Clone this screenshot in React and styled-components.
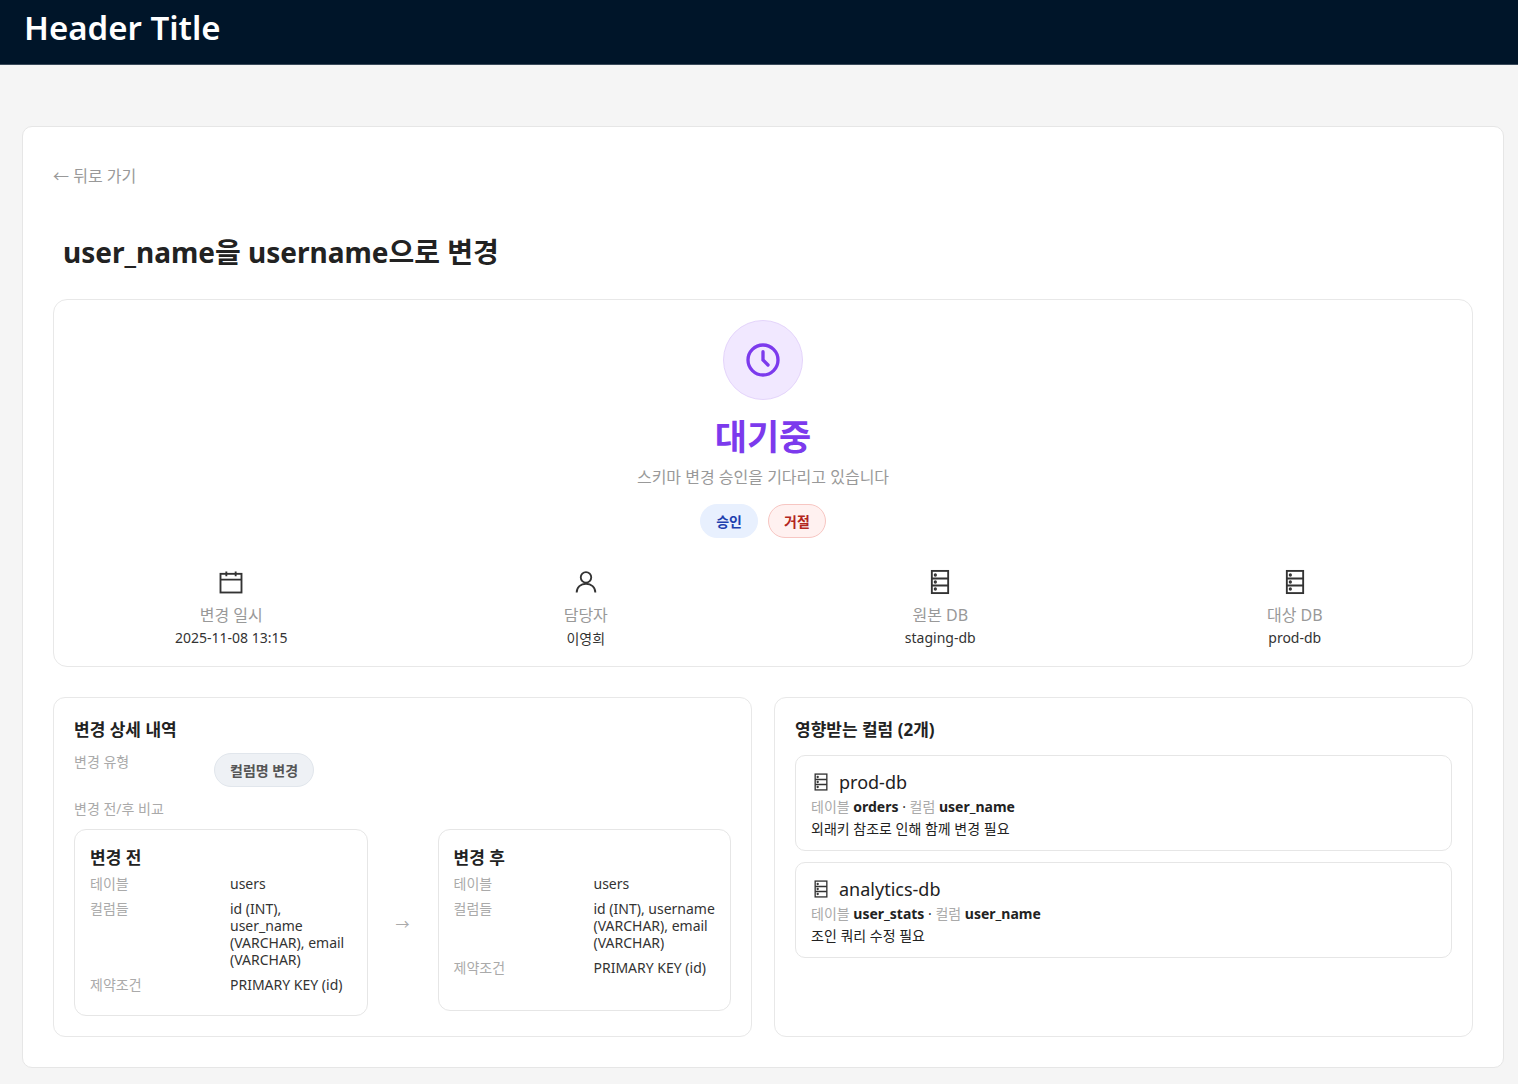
import styled, { createGlobalStyle } from 'styled-components';

const Global = createGlobalStyle`
  body {
    margin: 0;
    background: #f5f5f5;
    font-family: "Noto Sans", "Noto Sans CJK KR", sans-serif;
    color: #222;
  }
`;

const CalendarIcon = () => (
  <svg width="28" height="28" viewBox="0 0 24 24" fill="none" stroke="#333" strokeWidth="1.6">
    <rect x="3" y="5" width="18" height="16" />
    <path d="M3 10h18M8 3v4M16 3v4" />
  </svg>
);

const UserIcon = () => (
  <svg width="28" height="28" viewBox="0 0 24 24" fill="none" stroke="#333" strokeWidth="1.6">
    <circle cx="12" cy="8" r="4.5" />
    <path d="M4 21c0-4.5 3.5-7.5 8-7.5s8 3 8 7.5" />
  </svg>
);

const ServerIcon = ({ size = 28 }) => (
  <svg width={size} height={size} viewBox="0 0 24 24" fill="none" stroke="#333" strokeWidth="1.6">
    <rect x="5" y="2.5" width="14" height="19" />
    <path d="M5 9h14M5 15h14" />
    <circle cx="8" cy="6" r="0.6" fill="#333" />
    <circle cx="8" cy="12" r="0.6" fill="#333" />
    <circle cx="8" cy="18" r="0.6" fill="#333" />
  </svg>
);

const ClockIcon = () => (
  <svg width="40" height="40" viewBox="0 0 24 24" fill="none" stroke="#7c3aed" strokeWidth="2" strokeLinecap="round">
    <circle cx="12" cy="12" r="9" />
    <path d="M12 7v5l3 3" />
  </svg>
);

const meta = [
  { icon: <CalendarIcon />, label: '변경 일시', value: '2025-11-08 13:15' },
  { icon: <UserIcon />, label: '담당자', value: '이영희' },
  { icon: <ServerIcon />, label: '원본 DB', value: 'staging-db' },
  { icon: <ServerIcon />, label: '대상 DB', value: 'prod-db' },
];

const before = [
  ['테이블', 'users'],
  ['컬럼들', 'id (INT), user_name (VARCHAR), email (VARCHAR)'],
  ['제약조건', 'PRIMARY KEY (id)'],
];
const after = [
  ['테이블', 'users'],
  ['컬럼들', 'id (INT), username (VARCHAR), email (VARCHAR)'],
  ['제약조건', 'PRIMARY KEY (id)'],
];

const affected = [
  { db: 'prod-db', table: 'orders', column: 'user_name', note: '외래키 참조로 인해 함께 변경 필요' },
  { db: 'analytics-db', table: 'user_stats', column: 'user_name', note: '조인 쿼리 수정 필요' },
];

function CompareCard({ title, rows }) {
  return (
    <SchemaCard>
      <SchemaTitle>{title}</SchemaTitle>
      {rows.map(([k, v]) => (
        <SchemaRow key={k}>
          <Muted>{k}</Muted>
          <span>{v}</span>
        </SchemaRow>
      ))}
    </SchemaCard>
  );
}

export default function App() {
  return (
    <>
      <Global />
      <Header>Header Title</Header>
      <Main>
        <Card>
          <Back>← 뒤로 가기</Back>
          <Title>user_name을 username으로 변경</Title>
          <StatusBox>
            <IconCircle><ClockIcon /></IconCircle>
            <StatusText>대기중</StatusText>
            <StatusSub>스키마 변경 승인을 기다리고 있습니다</StatusSub>
            <Actions>
              <Pill tone="blue">승인</Pill>
              <Pill tone="red">거절</Pill>
            </Actions>
            <MetaGrid>
              {meta.map(m => (
                <MetaItem key={m.label}>
                  {m.icon}
                  <MetaLabel>{m.label}</MetaLabel>
                  <MetaValue>{m.value}</MetaValue>
                </MetaItem>
              ))}
            </MetaGrid>
          </StatusBox>
          <Columns>
            <Panel>
              <PanelTitle>변경 상세 내역</PanelTitle>
              <TypeRow>
                <Muted>변경 유형</Muted>
                <TypeTag>컬럼명 변경</TypeTag>
              </TypeRow>
              <Muted>변경 전/후 비교</Muted>
              <Compare>
                <CompareCard title="변경 전" rows={before} />
                <Arrow>→</Arrow>
                <CompareCard title="변경 후" rows={after} />
              </Compare>
            </Panel>
            <Panel>
              <PanelTitle>영향받는 컬럼 (2개)</PanelTitle>
              <AffectedList>
                {affected.map(a => (
                  <AffectedCard key={a.db}>
                    <DbName><ServerIcon size={20} />{a.db}</DbName>
                    <AffectedMeta>
                      <Muted>테이블</Muted> <b>{a.table}</b> · <Muted>컬럼</Muted> <b>{a.column}</b>
                    </AffectedMeta>
                    <Note>{a.note}</Note>
                  </AffectedCard>
                ))}
              </AffectedList>
            </Panel>
          </Columns>
        </Card>
      </Main>
    </>
  );
}

const Header = styled.header`
  height: 65px;
  background: #001529;
  color: #fff;
  font-size: 33px;
  font-weight: 600;
  padding: 0 24px;
  display: flex;
  align-items: center;
  line-height: 1;
  padding-bottom: 10px;
  box-sizing: border-box;
  border-bottom: 1px solid #3a4a5a;
`;

const Main = styled.main`
  padding: 61px 14px 18px 22px;
`;

const Card = styled.div`
  background: #fff;
  border-radius: 10px;
  border: 1px solid #e6e6e6;
  padding: 36px 30px 30px;
`;

const Back = styled.div`
  font-size: 16px;
  color: #999;
  margin-bottom: 44px;
`;

const Title = styled.h1`
  font-size: 28px;
  font-weight: 700;
  margin: 0 0 28px 10px;
  color: #222;
`;

const StatusBox = styled.section`
  border: 1px solid #e8e8e8;
  border-radius: 14px;
  padding: 20px 0 18px;
  display: flex;
  flex-direction: column;
  align-items: center;
`;

const IconCircle = styled.div`
  width: 78px;
  height: 78px;
  border-radius: 50%;
  background: #f1e8ff;
  border: 1px solid #e4d4fb;
  display: flex;
  align-items: center;
  justify-content: center;
`;

const StatusText = styled.div`
  margin-top: 16px;
  font-size: 35px;
  font-weight: 700;
  color: #7c3aed;
  line-height: 1.2;
`;

const StatusSub = styled.div`
  margin-top: 6px;
  font-size: 16px;
  color: #999;
`;

const Actions = styled.div`
  display: flex;
  gap: 10px;
  margin-top: 16px;
`;

const Pill = styled.button`
  font-family: inherit;
  font-size: 14px;
  font-weight: 700;
  height: 34px;
  padding: 0 15px;
  border-radius: 17px;
  cursor: pointer;
  background: ${p => (p.tone === 'blue' ? '#e8f0fe' : '#fff1f0')};
  color: ${p => (p.tone === 'blue' ? '#1d3fae' : '#b3261e')};
  border: 1px solid ${p => (p.tone === 'blue' ? '#e8f0fe' : '#f7c6c2')};
`;

const MetaGrid = styled.div`
  margin-top: 30px;
  width: 100%;
  display: grid;
  grid-template-columns: repeat(4, 1fr);
`;

const MetaItem = styled.div`
  display: flex;
  flex-direction: column;
  align-items: center;
`;

const MetaLabel = styled.div`
  margin-top: 6px;
  font-size: 16px;
  color: #999;
`;

const MetaValue = styled.div`
  font-size: 14px;
  color: #333;
  margin-top: 2px;
`;

const Columns = styled.div`
  margin-top: 30px;
  display: grid;
  grid-template-columns: 1fr 1fr;
  gap: 22px;
`;

const Panel = styled.section`
  border: 1px solid #e8e8e8;
  border-radius: 12px;
  padding: 18px 20px 20px;
  min-height: 290px;
`;

const PanelTitle = styled.h3`
  font-size: 17px;
  font-weight: 700;
  margin: 0 0 10px;
`;

const Muted = styled.span`
  color: #aaa;
  font-size: 14px;
`;

const TypeRow = styled.div`
  display: grid;
  grid-template-columns: 140px auto;
  align-items: start;
  margin-bottom: 10px;
  justify-items: start;
`;

const TypeTag = styled.span`
  margin-top: 2px;
  background: #eef1f5;
  border: 1px solid #e1e6ec;
  border-radius: 17px;
  padding: 6px 15px;
  font-size: 14px;
  font-weight: 700;
  color: #555;
`;

const Compare = styled.div`
  margin-top: 10px;
  display: grid;
  grid-template-columns: 1fr 70px 1fr;
  align-items: start;
`;

const Arrow = styled.div`
  align-self: center;
  text-align: center;
  color: #aaa;
  font-size: 14px;
`;

const SchemaCard = styled.div`
  border: 1px solid #e6e6e6;
  border-radius: 12px;
  padding: 14px 15px 14px;
  min-height: 152px;
`;

const SchemaTitle = styled.div`
  font-size: 17px;
  font-weight: 700;
  margin-bottom: 6px;
`;

const SchemaRow = styled.div`
  display: grid;
  grid-template-columns: 140px 1fr;
  font-size: 14px;
  line-height: 17px;
  color: #333;
  margin-bottom: 8px;
`;

const AffectedList = styled.div`
  display: flex;
  flex-direction: column;
  gap: 11px;
  margin-top: 14px;
`;

const AffectedCard = styled.div`
  border: 1px solid #e6e6e6;
  border-radius: 10px;
  padding: 14px 15px 12px;
`;

const DbName = styled.div`
  display: flex;
  align-items: center;
  gap: 8px;
  font-size: 18px;
  color: #222;
`;

const AffectedMeta = styled.div`
  font-size: 14px;
  margin-top: 2px;
  color: #333;
  b { font-weight: 700; color: #222; }
`;

const Note = styled.div`
  font-size: 14px;
  margin-top: 2px;
  color: #222;
`;
